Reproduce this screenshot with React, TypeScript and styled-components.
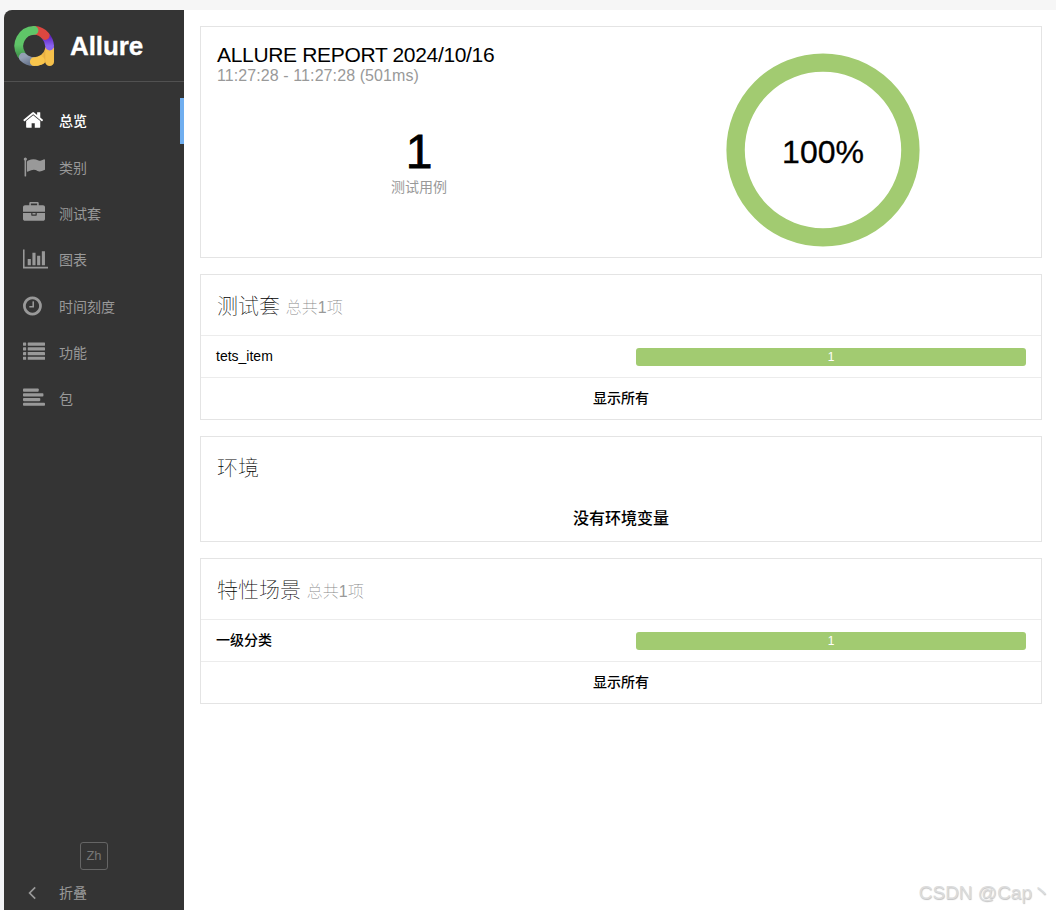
import type { ReactNode } from "react";
import styled, { createGlobalStyle } from "styled-components";

const GlobalStyle = createGlobalStyle`
    * {
        box-sizing: border-box;
    }
    body {
        margin: 0;
        background: #fff;
        color: #000;
        font-family: "Liberation Sans", "Noto Sans CJK SC", sans-serif;
        font-size: 14px;
        overflow: hidden;
    }
`

type NavItem = {
    label: string
    icon: ReactNode
    viewBox: string
    width: number
    active?: boolean
}

const lineRows = [128, 512, 896, 1280]
const alignWidths = [1280, 1664, 1408, 1792]

const navItems: NavItem[] = [
    {
        label: "总览",
        active: true,
        viewBox: "64 0 1664 1792",
        width: 20.4,
        icon: <path d="M1472 992v480q0 26-19 45t-45 19h-384v-384h-256v384h-384q-26 0-45-19t-19-45v-480q0-1 .5-3t.5-3l575-474 575 474q1 2 1 6zm223-69l-62 74q-8 9-21 11h-3q-13 0-21-7l-692-577-692 577q-12 8-24 7-13-2-21-11l-62-74q-8-10-7-23.5t11-21.5l719-599q32-26 76-26t76 26l244 204v-195q0-14 9-23t23-9h192q14 0 23 9t9 23v408l219 182q10 8 11 21.5t-7 23.5z" />,
    },
    {
        label: "类别",
        viewBox: "0 0 1792 1792",
        width: 22,
        icon: <path d="M320 256q0 72-64 110v1266q0 13-9.5 22.5t-22.5 9.5h-64q-13 0-22.5-9.5t-9.5-22.5v-1266q-64-38-64-110 0-53 37.5-90.5t90.5-37.5 90.5 37.5 37.5 90.5zm1472 64v763q0 25-12.5 38.5t-39.5 27.5q-215 116-369 116-61 0-123.5-22t-108.5-48-115.5-48-142.5-22q-192 0-464 146-17 9-33 9-26 0-45-19t-19-45v-742q0-32 31-55 21-14 79-43 236-120 421-120 107 0 200 29t219 88q38 19 88 19 54 0 117.5-21t110-47 88-47 54.5-21q26 0 45 19t19 45z" />,
    },
    {
        label: "测试套",
        viewBox: "0 0 1792 1792",
        width: 22,
        icon: <path d="M640 256h512v-128h-512v128zm1152 640v480q0 66-47 113t-113 47h-1472q-66 0-113-47t-47-113v-480h672v160q0 26 19 45t45 19h320q26 0 45-19t19-45v-160h672zm-768 0v128h-256v-128h256zm768-480v384h-1792v-384q0-66 47-113t113-47h352v-160q0-40 28-68t68-28h576q40 0 68 28t28 68v160h352q66 0 113 47t47 113z" />,
    },
    {
        label: "图表",
        viewBox: "0 0 2048 1792",
        width: 25.1,
        icon: <path d="M640 896v512h-256v-512h256zm384-512v1024h-256v-1024h256zm1024 1152v128h-2048v-1536h128v1408h1920zm-640-896v768h-256v-768h256zm384-384v1152h-256v-1152h256z" />,
    },
    {
        label: "时间刻度",
        viewBox: "128 0 1536 1792",
        width: 18.9,
        icon: <path d="M1024 544v448q0 14-9 23t-23 9h-320q-14 0-23-9t-9-23v-64q0-14 9-23t23-9h224v-352q0-14 9-23t23-9h64q14 0 23 9t9 23zm416 352q0-148-73-273t-198-198-273-73-273 73-198 198-73 273 73 273 198 198 273 73 273-73 198-198 73-273zm224 0q0 209-103 385.5t-279.5 279.5-385.5 103-385.5-103-279.5-279.5-103-385.5 103-385.5 279.5-279.5 385.5-103 385.5 103 279.5 279.5 103 385.5z" />,
    },
    {
        label: "功能",
        viewBox: "0 0 1792 1792",
        width: 22,
        icon: lineRows.map((y) => (
            <g key={y}>
                <rect x="0" y={y} width="256" height="256" rx="32" />
                <rect x="384" y={y} width="1408" height="256" rx="32" />
            </g>
        )),
    },
    {
        label: "包",
        viewBox: "0 0 1792 1792",
        width: 22,
        icon: lineRows.map((y, i) => (
            <rect key={y} x="0" y={y} width={alignWidths[i]} height="256" rx="64" />
        )),
    },
]

function Logo() {
    return (
        <svg width="41" height="41" viewBox="0 0 42 42" fill="none" strokeWidth="9" strokeLinecap="round">
            <defs>
                <linearGradient id="green" x1="0" y1="0" x2="0" y2="1">
                    <stop offset="0.6" stopColor="#5fc568" />
                    <stop offset="1" stopColor="#459b50" />
                </linearGradient>
                <linearGradient id="grey" x1="0" y1="0" x2="1" y2="1">
                    <stop offset="0" stopColor="#94a0b4" />
                    <stop offset="1" stopColor="#6b7890" />
                </linearGradient>
                <linearGradient id="purple" x1="0" y1="0" x2="0" y2="1">
                    <stop offset="0" stopColor="#6024c0" />
                    <stop offset="1" stopColor="#8a63f0" />
                </linearGradient>
                <linearGradient id="yellow" x1="0" y1="0" x2="1" y2="0">
                    <stop offset="0.4" stopColor="#f8c54c" />
                    <stop offset="1" stopColor="#d29438" />
                </linearGradient>
            </defs>
            <path d="M36.3 24A16 16 0 0 1 20.8 36.5" stroke="url(#yellow)" />
            <path d="M32 22H41V36.5A4.5 4.5 0 0 1 32 36.5Z" fill="#f5c04b" stroke="none" />
            <path d="M32.5 10.6A16 16 0 0 1 36.5 20.5" stroke="url(#purple)" />
            <path d="M21 4.5A16 16 0 0 1 32 9.8" stroke="#db4740" />
            <path d="M7.4 29A16 16 0 0 1 20.5 4.5" stroke="url(#green)" />
            <path d="M20.5 36.5A16 16 0 0 1 9.4 32" stroke="url(#grey)" />
            <path d="M27 35.3Q24 36.5 20.8 36.5" stroke="#f8c54c" />
        </svg>
    )
}

function ResultList({ title, name }: { title: string; name: string }) {
    return (
        <Widget>
            <WidgetTitle>
                {title} <Muted>总共<CountDigit>1</CountDigit>项</Muted>
            </WidgetTitle>
            <TableRow>
                <RowName>{name}</RowName>
                <StatusBar>1</StatusBar>
            </TableRow>
            <ShowAll>显示所有</ShowAll>
        </Widget>
    )
}

export default function App() {
    return (
        <Page>
            <GlobalStyle />
            <Sidebar>
                <Brand>
                    <Logo />
                    <BrandName>Allure</BrandName>
                </Brand>
                <Nav>
                    {navItems.map((item) => (
                        <NavLink key={item.label} $active={item.active}>
                            <NavIcon>
                                <svg width={item.width} height="22" viewBox={item.viewBox} fill="currentColor">
                                    {item.icon}
                                </svg>
                            </NavIcon>
                            {item.label}
                        </NavLink>
                    ))}
                </Nav>
                <Footer>
                    <Language>Zh</Language>
                    <Collapse>
                        <NavIcon>
                            <svg width="20" height="14" viewBox="0 0 20 14" fill="none" stroke="currentColor" strokeWidth="1.7">
                                <path d="M12.2 1.4L6.6 7L12.2 12.6" />
                            </svg>
                        </NavIcon>
                        折叠
                    </Collapse>
                </Footer>
            </Sidebar>
            <Content>
                <Summary>
                    <SummaryColumn>
                        <ReportTitle>ALLURE REPORT 2024/10/16</ReportTitle>
                        <ReportTime>11:27:28 - 11:27:28 (501ms)</ReportTime>
                        <Total>1</Total>
                        <TotalLabel>测试用例</TotalLabel>
                    </SummaryColumn>
                    <ChartColumn>
                        <svg width="194" height="194" viewBox="0 0 194 194">
                            <circle cx="97" cy="97" r="87.4" fill="none" stroke="#a2cb71" strokeWidth="18.4" />
                            <text x="97" y="110" textAnchor="middle" fontSize="32" stroke="#000" strokeWidth="0.3">100%</text>
                        </svg>
                    </ChartColumn>
                </Summary>
                <ResultList title="测试套" name="tets_item" />
                <Widget>
                    <WidgetTitle>环境</WidgetTitle>
                    <EmptyText>没有环境变量</EmptyText>
                </Widget>
                <ResultList title="特性场景" name="一级分类" />
            </Content>
            <Watermark>CSDN @Cap丶</Watermark>
        </Page>
    )
}

const Page = styled.div`
    display: flex;
    width: 1056px;
    height: 910px;
    padding: 10px 0 0 4px;
    background: linear-gradient(#f6f6f6 10px, #f3f4f6 10px);
`

const Sidebar = styled.aside`
    display: flex;
    flex: none;
    flex-direction: column;
    width: 180px;
    background: #343434;
    border-top-left-radius: 8px;
`

const Brand = styled.div`
    display: flex;
    align-items: center;
    height: 72px;
    padding: 1px 0 0 9.5px;
    border-bottom: 1px solid #515151;
`

const BrandName = styled.div`
    margin-left: 15.5px;
    color: #fff;
    font-size: 26px;
    font-weight: bold;
    letter-spacing: -0.1px;
    -webkit-text-stroke: 0.3px #fff;
`

const Nav = styled.nav`
    padding-top: 16px;
`

const NavLink = styled.div<{ $active?: boolean }>`
    display: flex;
    align-items: center;
    height: 46.33px;
    padding: 0 0 1.5px 19px;
    color: ${({ $active }) => ($active ? "#fff" : "#999")};
    font-weight: ${({ $active }) => ($active ? 500 : 400)};
    border-right: 4px solid ${({ $active }) => ($active ? "#70aeef" : "transparent")};
`

const NavIcon = styled.span`
    display: flex;
    width: 36px;
`

const Footer = styled.div`
    margin-top: auto;
`

const Language = styled.div`
    width: 28px;
    height: 28px;
    margin: 0 auto;
    border: 1px solid #656565;
    border-radius: 3px;
    color: #777;
    font-size: 13px;
    line-height: 26px;
    text-align: center;
`

const Collapse = styled.div`
    display: flex;
    align-items: center;
    height: 40px;
    padding: 6px 0 0 19px;
    color: #999;
    line-height: 34px;
`

const Content = styled.main`
    display: flex;
    flex: 1;
    flex-direction: column;
    gap: 16px;
    padding: 16px 14px 0 16px;
    background: #fff;
`

const Widget = styled.section`
    border: 1px solid #e4e4e4;
`

const Summary = styled(Widget)`
    display: flex;
    height: 232px;
`

const SummaryColumn = styled.div`
    width: 436px;
    padding: 17px 16px 0;
`

const ReportTitle = styled.div`
    font-size: 21px;
    line-height: 22px;
    letter-spacing: -0.33px;
    white-space: nowrap;
`

const ReportTime = styled.div`
    color: #999;
    font-size: 16px;
    line-height: 20px;
    letter-spacing: 0.09px;
`

const Total = styled.div`
    margin-top: 40px;
    font-size: 48px;
    line-height: 52px;
    text-align: center;
    -webkit-text-stroke: 0.8px #000;
`

const TotalLabel = styled.div`
    color: #999;
    line-height: 18px;
    text-align: center;
`

const ChartColumn = styled.div`
    width: 372px;
    padding-top: 26px;
    text-align: center;
`

const WidgetTitle = styled.h2`
    height: 60px;
    margin: 0;
    padding: 0 16px;
    font-size: 21px;
    font-weight: 100;
    line-height: 62px;
`

const Muted = styled.small`
    color: #888;
    font-size: 16px;
`

const CountDigit = styled.span`
    color: #999;
`

const TableRow = styled.div`
    display: flex;
    align-items: center;
    justify-content: space-between;
    height: 42px;
    padding: 0 15px;
    border-top: 1px solid #ececec;
`

const RowName = styled.span`
    padding-bottom: 2px;
    font-weight: 500;
    line-height: 20px;
`

const StatusBar = styled.div`
    width: 390px;
    height: 18px;
    margin-top: 1px;
    border-radius: 3px;
    background: #a2cb71;
    color: #fff;
    font-size: 12px;
    line-height: 18px;
    text-align: center;
`

const ShowAll = styled.div`
    height: 42px;
    border-top: 1px solid #ececec;
    font-weight: 500;
    line-height: 40px;
    text-align: center;
`

const EmptyText = styled.div`
    height: 44px;
    font-size: 16px;
    font-weight: 500;
    line-height: 44px;
    text-align: center;
`

const Watermark = styled.div`
    position: absolute;
    right: 5px;
    bottom: 4px;
    color: #dcdcdc;
    font-size: 19px;
    line-height: 26px;
    text-shadow: 0.5px 0.5px 1px #c0c0c0;
`
